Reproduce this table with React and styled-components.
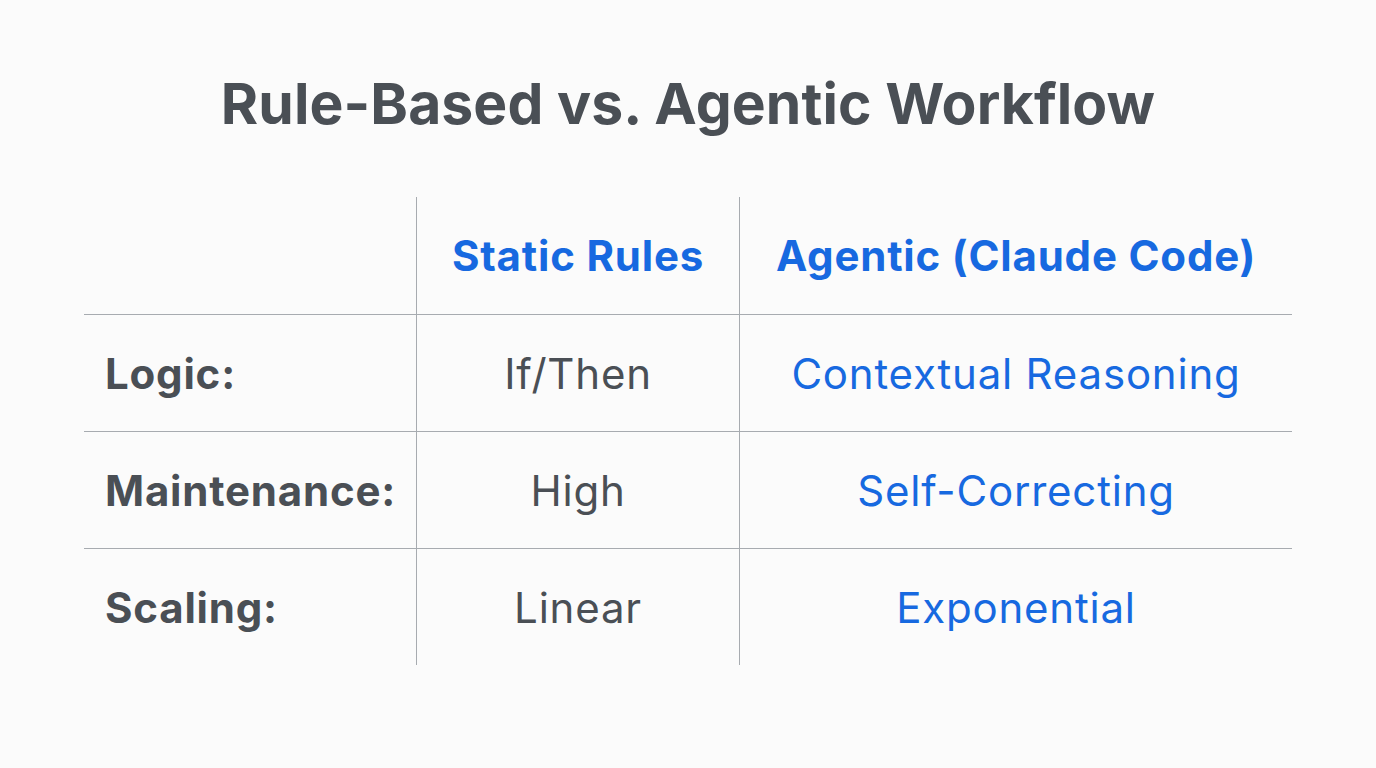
import styled, { createGlobalStyle } from "styled-components"

const GlobalStyle = createGlobalStyle`
    html, body {
        margin: 0;
        padding: 0;
        background: #fbfbfb;
    }
    body {
        font-family: Inter, "Noto Sans", sans-serif;
    }
`

const Page = styled.div`
    width: 1376px;
    height: 768px;
    display: flex;
    flex-direction: column;
    align-items: center;
    background: #fbfbfb;
`

const Title = styled.h1`
    margin: 70px 0 0;
    font-size: 57px;
    font-weight: 700;
    line-height: 68px;
    color: #4a4f55;
    letter-spacing: 0.1px;
`

const Table = styled.div`
    margin-top: 59px;
    display: grid;
    grid-template-columns: 333px 323px 552px;
    grid-auto-rows: 117px;
`

const Cell = styled.div`
    display: flex;
    align-items: center;
    justify-content: ${props => props.$label ? "flex-start" : "center"};
    padding-left: ${props => props.$label ? "21px" : "0"};
    border-right: ${props => props.$last ? "none" : "1px solid #a7abb0"};
    border-top: ${props => props.$top ? "1px solid #a7abb0" : "none"};
    font-size: 42px;
    letter-spacing: 0.8px;
    font-weight: ${props => props.$bold ? 700 : 400};
    color: ${props => props.$blue ? "#1769e0" : "#4a4f55"};
    white-space: nowrap;
`

const rows = [
    ["Logic:", "If/Then", "Contextual Reasoning"],
    ["Maintenance:", "High", "Self-Correcting"],
    ["Scaling:", "Linear", "Exponential"],
]

const App = () => {
    return (
        <Page>
            <GlobalStyle />
            <Title>Rule-Based vs. Agentic Workflow</Title>
            <Table>
                <Cell $label />
                <Cell $bold $blue>Static Rules</Cell>
                <Cell $bold $blue $last>Agentic (Claude Code)</Cell>
                {rows.map((row) => (
                    <>
                        <Cell $label $bold $top>{row[0]}</Cell>
                        <Cell $top>{row[1]}</Cell>
                        <Cell $top $blue $last>{row[2]}</Cell>
                    </>
                ))}
            </Table>
        </Page>
    )
}

export default App
